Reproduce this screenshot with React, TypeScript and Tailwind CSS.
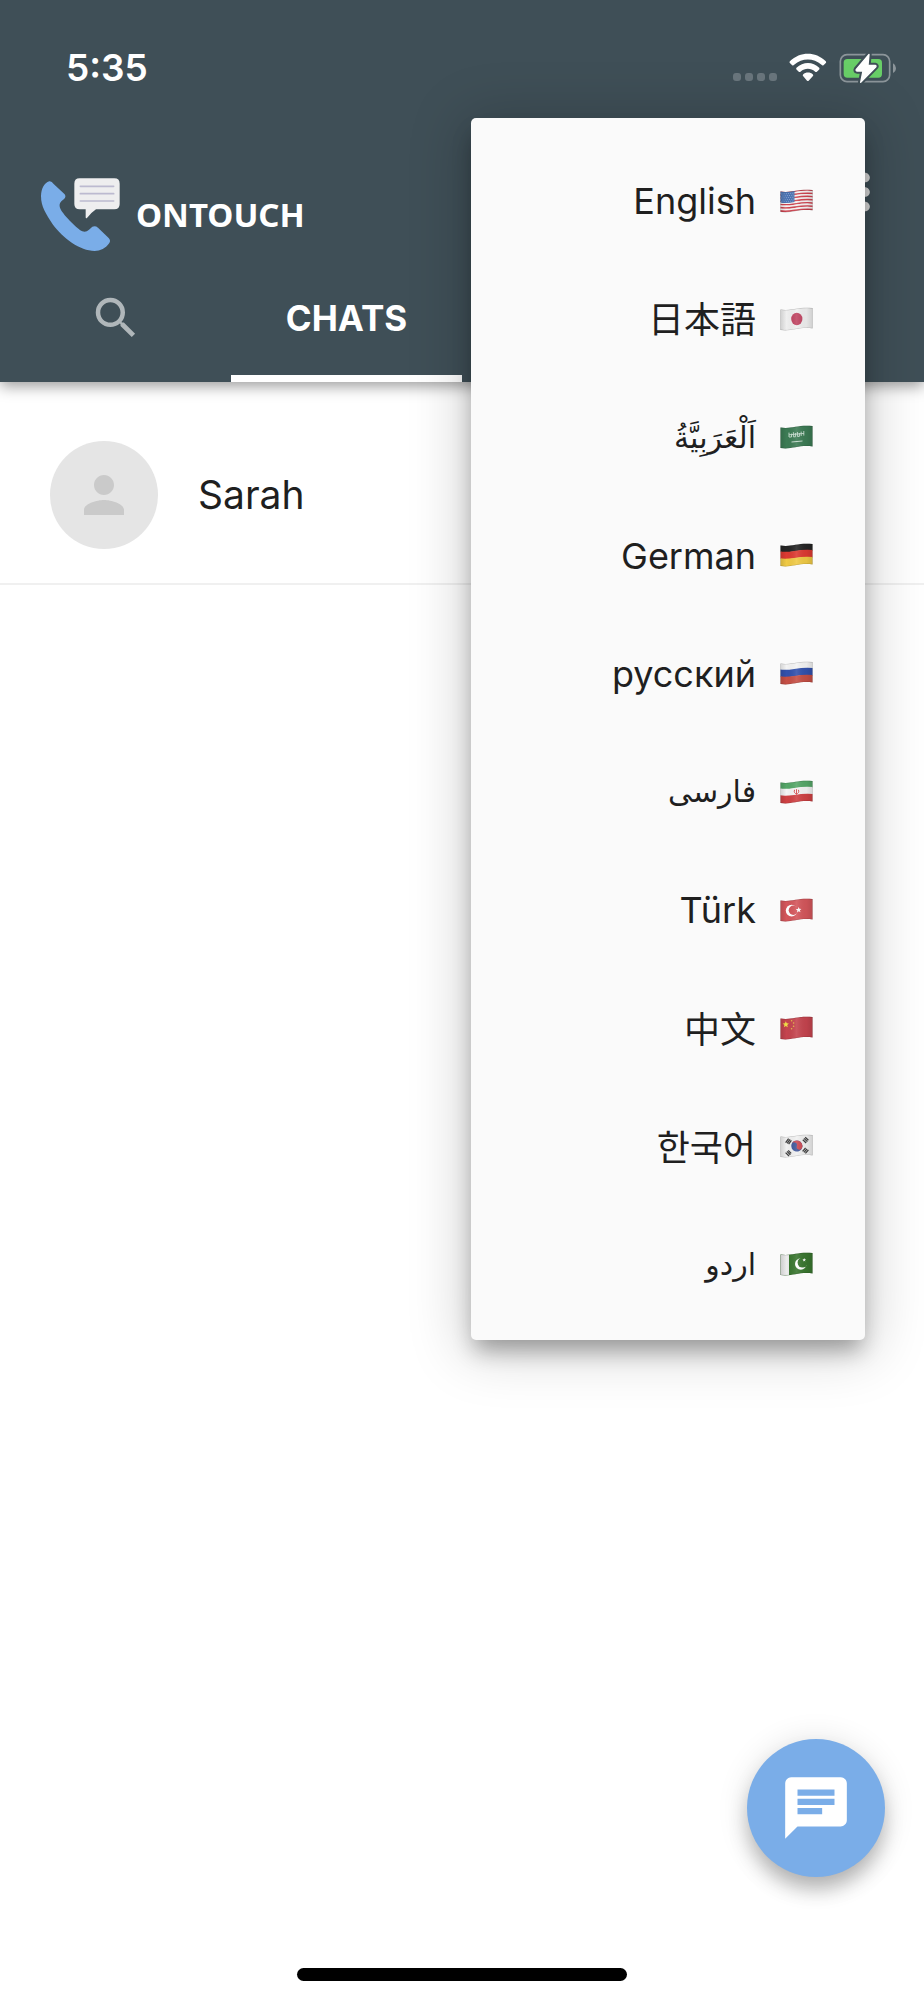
import { useId } from "react";
import type { ReactNode } from "react";
import { MdChat, MdMoreVert, MdPerson, MdSearch } from "react-icons/md";

type Language = {
  code: string;
  label: string;
  className: string;
  flag: ReactNode;
  rtl?: boolean;
};

// one horizontal stripe that follows the wave of the cloth
function Band({ y, h, color }: { y: number; h: number; color: string }) {
  const m = y + h / 2;
  return (
    <path
      d={`M-1 ${m + 1.8} C11 ${m + 4.4} 18 ${m - 1.4} 34 ${m + 0.8}`}
      fill="none"
      stroke={color}
      strokeWidth={h + 0.3}
    />
  );
}

function Flag({ children }: { children: ReactNode }) {
  const id = useId();
  const cloth = "M.5 2.4 C11 4.4 18 -.6 32.5 1 V21.4 C18 19.8 11 25 .5 23 Z";
  return (
    <svg viewBox="0 0 33 25" className="h-[25px] w-[33px] shrink-0" aria-hidden="true">
      <defs>
        <clipPath id={id}>
          <path d={cloth} />
        </clipPath>
        <linearGradient id={`${id}-shade`}>
          <stop offset="0" stopColor="#000" stopOpacity=".14" />
          <stop offset=".2" stopColor="#000" stopOpacity="0" />
          <stop offset=".5" stopColor="#fff" stopOpacity=".1" />
          <stop offset=".8" stopColor="#000" stopOpacity=".04" />
          <stop offset="1" stopColor="#000" stopOpacity=".14" />
        </linearGradient>
      </defs>
      <g clipPath={`url(#${id})`}>
        {children}
        <rect width="33" height="25" fill={`url(#${id}-shade)`} />
        <path d={cloth} fill="none" stroke="#000" strokeOpacity=".22" strokeWidth="1" />
      </g>
    </svg>
  );
}

function Cloth({ color }: { color: string }) {
  return <rect width="33" height="25" fill={color} />;
}

const usStripes = Array.from({ length: 13 }, (_, i) => i);

const languages: Language[] = [
  {
    code: "en",
    label: "English",
    className: "font-[Inter,sans-serif] text-[36px]",
    flag: (
      <Flag>
        <Cloth color="#f4f1f1" />
        {usStripes.map((i) => (
          <Band key={i} y={i * 1.6} h={1.3} color={i % 2 ? "#f6f3f3" : "#cf4450"} />
        ))}
        <path d="M0 2 C5 3.4 10 2.8 14.5 1.8 V13 C10 14 5 14.6 0 13.6 Z" fill="#4c74b4" />
        <g fill="none" stroke="#b4c6e2" strokeWidth=".7" strokeDasharray=".8 1.4">
          <path d="M1.5 5 L14 4.2 M2.6 7 L14 6.2 M1.5 9 L14 8.2 M2.6 11 L14 10.2" />
          <path d="M1.5 12.8 L14 12" />
        </g>
      </Flag>
    ),
  },
  {
    code: "ja",
    label: "日本語",
    className: "font-['Noto_Sans_CJK_JP',sans-serif] text-[36px] pb-1",
    flag: (
      <Flag>
        <Cloth color="#efefef" />
        <ellipse cx="16.8" cy="12" rx="5.6" ry="6.2" fill="#c04562" />
      </Flag>
    ),
  },
  {
    code: "ar",
    label: "اَلْعَرَبِيَّةُ",
    rtl: true,
    className: "font-['DejaVu_Sans',sans-serif] text-[30px]",
    flag: (
      <Flag>
        <Cloth color="#3c7b54" />
        <path
          d="M9 7.6 V12 H11.5 V8.6 M13.4 7.2 V11.8 H15.4 V8 M17.4 7 V11.4 H19.4 V8 M21.2 6.6 V11 M23.8 6 V10.6 M9 9.8 L24 8.4"
          fill="none"
          stroke="#c9dfd1"
          strokeWidth=".9"
        />
        <path d="M11.5 17 L22.5 16" stroke="#d5e6db" strokeWidth=".9" />
      </Flag>
    ),
  },
  {
    code: "de",
    label: "German",
    className: "font-[Inter,sans-serif] text-[36px]",
    flag: (
      <Flag>
        <Band y={-2} h={8.6} color="#252525" />
        <Band y={6.6} h={7} color="#dd3a32" />
        <Band y={13.6} h={9} color="#f0ca45" />
      </Flag>
    ),
  },
  {
    code: "ru",
    label: "русский",
    className: "font-[Inter,sans-serif] text-[36px]",
    flag: (
      <Flag>
        <Band y={-2} h={8.6} color="#f4f4f4" />
        <Band y={6.6} h={7} color="#3251ad" />
        <Band y={13.6} h={9} color="#c64f45" />
      </Flag>
    ),
  },
  {
    code: "fa",
    label: "فارسی",
    rtl: true,
    className: "font-['DejaVu_Sans',sans-serif] text-[30px]",
    flag: (
      <Flag>
        <Band y={-2} h={8.6} color="#55a768" />
        <Band y={6.6} h={7} color="#f4f4f4" />
        <Band y={13.6} h={9} color="#cf4143" />
        <path
          d="M14.6 9.8 C13.6 12 14.8 13.4 16.5 14 C18.2 13.4 19.4 12 18.4 9.8 M16.5 9.2 V14.6"
          fill="none"
          stroke="#d4494b"
          strokeWidth="1"
        />
      </Flag>
    ),
  },
  {
    code: "tr",
    label: "Türk",
    className: "font-[Inter,sans-serif] text-[36px]",
    flag: (
      <Flag>
        <Cloth color="#d4565b" />
        <circle cx="11.6" cy="12.6" r="5.8" fill="#fff" />
        <circle cx="13.4" cy="12.3" r="4.7" fill="#d4565b" />
        <path
          d="M18.6 9 l.8 1.8 2 .1 -1.5 1.4 .6 2 -1.8-1.1 -1.7 1.2 .4-2 -1.6-1.3 2.1-.2z"
          fill="#fff"
        />
      </Flag>
    ),
  },
  {
    code: "zh",
    label: "中文",
    className: "font-['Noto_Sans_CJK_SC',sans-serif] text-[36px] pb-1",
    flag: (
      <Flag>
        <Cloth color="#c5444e" />
        <path
          d="M5.8 5.2 l.9 2.1 2.2.1 -1.7 1.5 .6 2.3 -2-1.2 -2 1.3 .6-2.3 -1.8-1.5 2.3-.2z"
          fill="#f1de48"
        />
        <g fill="#e5b848">
          <circle cx="11.6" cy="4.8" r=".8" />
          <circle cx="13.6" cy="7" r=".8" />
          <circle cx="13.6" cy="10.2" r=".8" />
          <circle cx="11.6" cy="12.8" r=".8" />
        </g>
      </Flag>
    ),
  },
  {
    code: "ko",
    label: "한국어",
    className: "font-['Noto_Sans_CJK_KR',sans-serif] text-[36px] pb-1",
    flag: (
      <Flag>
        <Cloth color="#f1f1f1" />
        <g transform="rotate(18 16.8 12)">
          <circle cx="16.8" cy="12" r="5.6" fill="#41589b" />
          <path
            d="M11.2 12 a5.6 5.6 0 0 1 11.2 0 a2.8 2.8 0 0 1 -5.6 0 a2.8 2.8 0 0 0 -5.6 0z"
            fill="#cb4a54"
          />
        </g>
        <g stroke="#3f3f3f" strokeWidth="1.3">
          <path d="M5.6 8.6 l3-4 M7.1 9.4 l3-4 M8.6 10.2 l2.8-3.8" />
          <path d="M22.8 5.8 l3.4 3.2 M24 4.4 l3.4 3.2 M25.2 3.2 l3.2 3" />
          <path d="M5.6 18.6 l3.4 3.4 M7 17.4 l3.4 3.4 M8.2 16.4 l3 3" />
          <path d="M22.6 17.4 l3-3.6 M24 18.4 l3-3.6 M25.4 19.4 l3-3.6" />
        </g>
      </Flag>
    ),
  },
  {
    code: "ur",
    label: "اردو",
    rtl: true,
    className: "font-['DejaVu_Sans',sans-serif] text-[30px]",
    flag: (
      <Flag>
        <Cloth color="#39762f" />
        <rect width="9" height="25" fill="#ececec" />
        <circle cx="20.8" cy="12" r="5.8" fill="#fff" />
        <circle cx="22.6" cy="10.6" r="5" fill="#39762f" />
        <path
          d="M24.2 6 l.5 1.2 1.3.1 -1 .9 .3 1.2 -1.1-.6 -1.1.7 .3-1.3 -1-.8 1.3-.2z"
          fill="#fff"
        />
      </Flag>
    ),
  },
];

function WifiIcon() {
  return (
    <svg viewBox="266 98 114 88" className="h-[29px] w-[38px]" fill="#fff" aria-hidden="true">
      <path d="M268 123 C300 93 345 93 377 123 Q379 126 377 128 L370 135 Q367 137 364 134 C340 112 305 112 281 134 Q278 137 275 135 L268 128 Q266 126 268 123Z" />
      <path d="M288 143 C308 123 338 123 357 143 Q359 146 357 148 L350 155 Q347 157 344 154 C332 143 313 143 301 154 Q298 157 295 155 L288 148 Q286 146 288 143Z" />
      <path d="M308 163 C316 155 330 155 338 163 Q340 166 338 168 L325 182 Q323 184 320 182 L308 168 Q306 166 308 163Z" />
    </svg>
  );
}

function BatteryIcon() {
  const bolt = "M508 102 L470 147 Q468 151 472 152 L490 152 L483 186 L528 140 Q531 136 526 135 L505 135 Z";
  return (
    <svg viewBox="418 98 174 93" className="h-[31px] w-[58px]" aria-hidden="true">
      <rect x="422" y="103" width="148" height="81" rx="20" fill="none" stroke="#8c959a" strokeWidth="5" />
      <path d="M580 129 Q589 134 589 143 Q589 153 580 158 Z" fill="#8c959a" />
      <rect x="432" y="116" width="115" height="56" rx="11" fill="#68ce67" />
      <path d={bolt} fill="#3f4f57" stroke="#3f4f57" strokeWidth="16" strokeLinejoin="round" />
      <path d={bolt} fill="#fff" stroke="#fff" strokeWidth="4" strokeLinejoin="round" />
    </svg>
  );
}

function Logo() {
  return (
    <svg viewBox="120 470 246 228" className="h-[76px] w-[82px] shrink-0" aria-hidden="true">
      <path
        d="M148 483 Q155 482 161 491 L194 522 Q199 529 193 535 L184 543 Q176 552 180 562 C184 578 232 626 247 633 Q258 637 267 628 L277 619 Q286 615 294 622 L326 653 Q333 660 328 668 C318 684 300 692 284 692 C240 692 190 655 158 612 C138 580 123 560 123 527 C124 505 132 488 148 483Z"
        fill="#7aade8"
      />
      <path
        d="M239 474 H343 Q359 474 359 490 V551 Q359 567 343 567 H288 Q272 578 261 593 Q257 596 257 590 V567 H239 Q223 567 223 551 V490 Q223 474 239 474Z"
        fill="#eeeeef"
      />
      <path d="M241 498 H341 M241 520 H341 M241 542 H341" stroke="#bcbad0" strokeWidth="5" strokeLinecap="round" />
    </svg>
  );
}

function StatusBar() {
  return (
    <div className="flex h-[125px] items-start justify-between pt-[46px] pr-[27px] pl-[66px]">
      <time className="text-[37px] leading-[44px] font-semibold text-white">5:35</time>
      <div className="flex items-start gap-3 pt-[7px]">
        <div className="flex gap-1 pt-5">
          <span className="size-2 rounded-[3px] bg-[#6a767d]" />
          <span className="size-2 rounded-[3px] bg-[#6a767d]" />
          <span className="size-2 rounded-[3px] bg-[#6a767d]" />
          <span className="size-2 rounded-[3px] bg-[#6a767d]" />
        </div>
        <WifiIcon />
        <BatteryIcon />
      </div>
    </div>
  );
}

function LanguageMenu() {
  return (
    <div
      role="menu"
      aria-label="Language"
      className="absolute top-[118px] right-[59px] flex min-h-[1222px] w-[394px] flex-col rounded-[5px] bg-[#fafafa] pt-6 pb-4 shadow-[0_14px_22px_-4px_rgba(0,0,0,0.32),0_6px_56px_8px_rgba(0,0,0,0.18)]"
    >
      {languages.map((lang) => (
        <button
          key={lang.code}
          type="button"
          role="menuitem"
          className="flex grow basis-0 items-center justify-end gap-6 pr-[52px] leading-[44px] text-[#1f1f1f]"
        >
          <span lang={lang.code} dir={lang.rtl ? "rtl" : "ltr"} className={lang.className}>
            {lang.label}
          </span>
          {lang.flag}
        </button>
      ))}
    </div>
  );
}

export default function App() {
  return (
    <div className="relative flex min-h-screen flex-col overflow-hidden bg-white font-[Inter,sans-serif]">
      <header className="bg-[#3f4f57] shadow-[0_4px_14px_rgba(0,0,0,0.4)]">
        <StatusBar />
        <div className="flex h-[129px] items-start justify-between pr-[30px] pl-10">
          <div className="flex items-center gap-3.5 pt-[52px]">
            <Logo />
            <h1 className="font-['Noto_Sans',sans-serif] text-[33px] leading-[44px] font-bold text-white">ONTOUCH</h1>
          </div>
          <button type="button" aria-label="More options" className="pt-[38px] text-[#dcdcdc]">
            <MdMoreVert className="size-[58px]" />
          </button>
        </div>
        <nav className="grid h-32 grid-cols-4">
          <button type="button" aria-label="Search" className="flex items-center justify-center text-[#b0b7ba]">
            <MdSearch className="size-[54px]" />
          </button>
          <button
            type="button"
            className="border-t-[7px] border-b-[7px] border-t-transparent border-b-white text-[35px] leading-[44px] font-bold text-white"
          >
            CHATS
          </button>
        </nav>
      </header>

      <main>
        <a href="#sarah" className="flex items-center gap-10 border-b-2 border-[#f0f0f0] pt-[59px] pb-[34px] pl-[50px]">
          <span className="flex size-[108px] items-center justify-center rounded-full bg-[#e5e5e5] text-[#cacaca]">
            <MdPerson className="size-[60px]" />
          </span>
          <span className="text-[39px] leading-[48px] text-[#1f1f1f]">Sarah</span>
        </a>
      </main>

      <div className="mx-auto mt-auto mb-[19px] h-[13px] w-[330px] rounded-full bg-black" />

      <button
        type="button"
        aria-label="New chat"
        className="absolute right-[39px] bottom-[123px] flex size-[138px] items-center justify-center rounded-full bg-[#7aade8] text-white shadow-[0_14px_20px_-2px_rgba(0,0,0,0.26),0_2px_32px_rgba(0,0,0,0.12)]"
      >
        <MdChat className="size-[74px]" />
      </button>

      <LanguageMenu />
    </div>
  );
}
